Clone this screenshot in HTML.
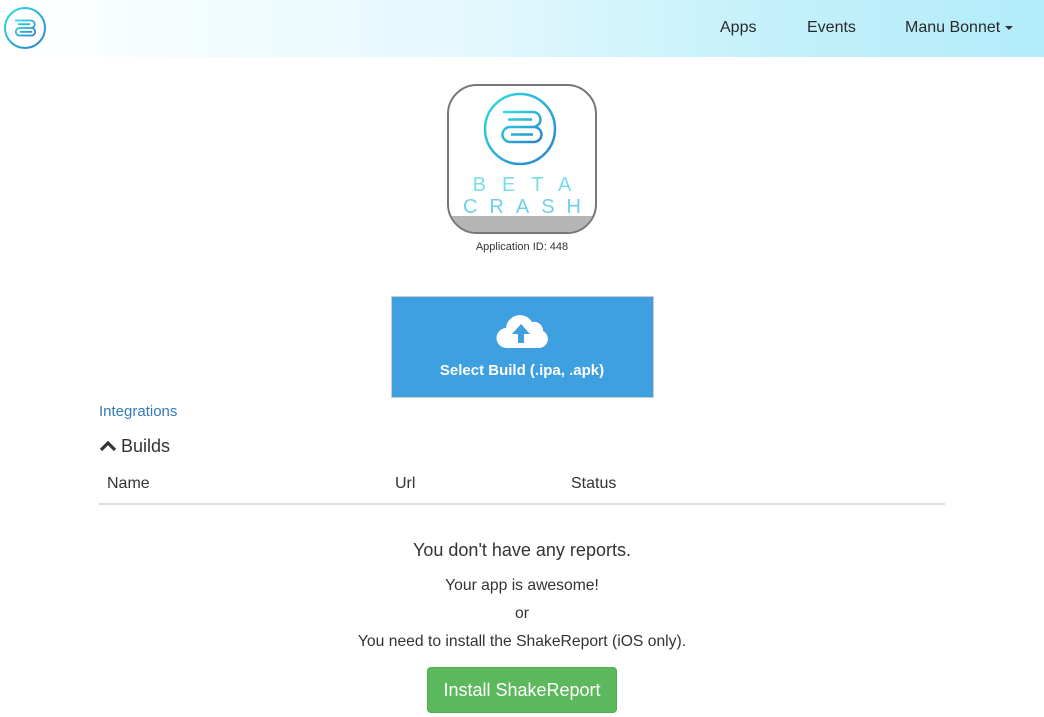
<!DOCTYPE html>
<html><head><meta charset="utf-8"><style>
*{margin:0;padding:0;box-sizing:border-box}
body{width:1044px;height:717px;overflow:hidden;background:#fff;font-family:"Liberation Sans",sans-serif;color:#333;position:relative}
.hdr{position:absolute;left:0;top:0;width:1044px;height:57px;background:linear-gradient(90deg,#fff 0%,#e3f8fd 45%,#c3f0fb 75%,#b2ecfa 100%)}
.nav{position:absolute;top:19px;font-size:16px;color:#2a2a2a}
.abs{position:absolute}
.c{position:absolute;left:0;width:1044px;text-align:center}
</style></head><body>
<div class="hdr"></div>
<svg class="abs" style="left:3px;top:6px" width="46" height="46" viewBox="0 0 46 46">
<defs><linearGradient id="g1" x1="0" y1="0" x2="1" y2="1"><stop offset="0" stop-color="#2ee0e0"/><stop offset="1" stop-color="#2a7fcc"/></linearGradient></defs>
<circle cx="22" cy="22" r="20" fill="none" stroke="url(#g1)" stroke-width="2"/>
<path d="M12 14.5H28A3.7 3.7 0 0 1 28 22H16A3.8 3.8 0 0 0 16 29.5H29A3.8 3.8 0 0 0 29 22M15 18.2H27M17 25.8H29" fill="none" stroke="url(#g1)" stroke-width="1.8"/>
</svg>
<div class="nav" style="left:720px">Apps</div>
<div class="nav" style="left:807px">Events</div>
<div class="nav" style="left:905px">Manu Bonnet <span style="display:inline-block;border-left:4px solid transparent;border-right:4px solid transparent;border-top:4px solid #333;vertical-align:middle"></span></div>

<div class="abs" style="left:447px;top:84px;width:150px;height:150px;border:2px solid #777;border-radius:30px;overflow:hidden;background:#fff">
<div class="abs" style="left:0;bottom:0;width:150px;height:16px;background:#b5b5b5"></div>
<svg class="abs" style="left:32px;top:5px" width="80" height="80" viewBox="0 0 80 80">
<defs><linearGradient id="g2" x1="0" y1="0" x2="1" y2="1"><stop offset="0" stop-color="#2ee0e0"/><stop offset="1" stop-color="#2a7fcc"/></linearGradient></defs>
<circle cx="39" cy="38" r="35" fill="none" stroke="url(#g2)" stroke-width="2.5"/>
<path d="M22 21H52A7.5 7.5 0 0 1 52 36H29A7.5 7.5 0 0 0 29 51H53A7.5 7.5 0 0 0 53 36M27 28.5H51M30 43.5H52" fill="none" stroke="url(#g2)" stroke-width="2.5"/>
</svg>
<div class="abs" style="left:0;top:88px;width:146px;text-align:center;font-size:20px;letter-spacing:16px;padding-left:16px;color:#78dcec">BETA</div>
<div class="abs" style="left:-2px;top:110px;width:150px;text-align:center;font-size:20px;letter-spacing:12px;padding-left:12px;color:#6fd0ea">CRASH</div>
</div>
<div class="c" style="top:241px;font-size:11px">Application ID: 448</div>

<div class="abs" style="left:391px;top:296px;width:263px;height:102px;background:#3e9fe1;border:1px solid #ccc"></div>
<svg class="abs" style="left:495px;top:310px" width="54" height="40" viewBox="0 0 54 40">
<path d="M12 38a10 10 0 0 1-1-20a14 14 0 0 1 26-6a9 9 0 0 1 11 9a9 9 0 0 1-4 17z" fill="#fff"/>
<path d="M26 14l-9 10h6v9h6v-9h6z" fill="#3e9fe1"/>
</svg>
<div class="c" style="top:362px;font-size:15px;color:#fff;font-weight:bold">Select Build (.ipa, .apk)</div>

<div class="abs" style="left:99px;top:403px;font-size:15px;color:#337ab7">Integrations</div>
<svg class="abs" style="left:99px;top:440px" width="18" height="12" viewBox="0 0 18 12"><path d="M2 10l7-7 7 7" fill="none" stroke="#333" stroke-width="3.2"/></svg>
<div class="abs" style="left:121px;top:436px;font-size:18px">Builds</div>
<div class="abs" style="left:107px;top:475px;font-size:16px;color:#333">Name</div>
<div class="abs" style="left:395px;top:475px;font-size:16px">Url</div>
<div class="abs" style="left:571px;top:475px;font-size:16px">Status</div>
<div class="abs" style="left:99px;top:503px;width:846px;height:2px;background:#ddd"></div>

<div class="c" style="top:540px;font-size:18px">You don't have any reports.</div>
<div class="c" style="top:577px;font-size:15.7px">Your app is awesome!</div>
<div class="c" style="top:605px;font-size:15.7px">or</div>
<div class="c" style="top:633px;font-size:15.7px">You need to install the ShakeReport (iOS only).</div>
<div class="abs" style="left:427px;top:667px;width:190px;height:46px;background:#5cb85c;border:1px solid #4cae4c;border-radius:4px;color:#fff;font-size:18px;text-align:center;line-height:44px">Install ShakeReport</div>
</body></html>
